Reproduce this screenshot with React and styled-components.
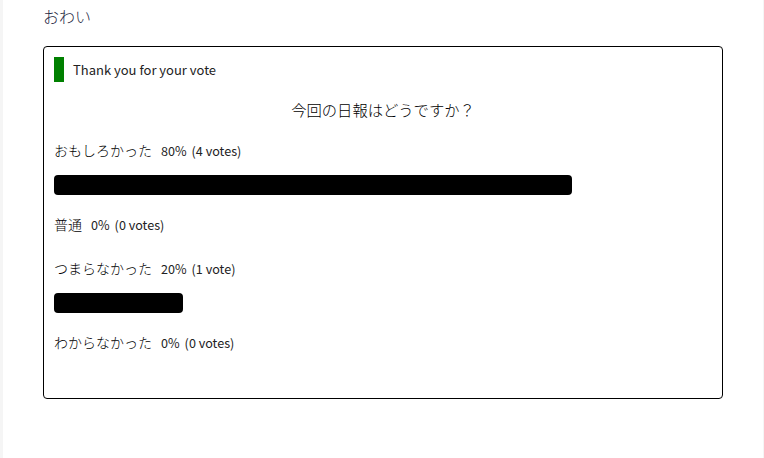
import React from "react";
import styled, { createGlobalStyle } from "styled-components";

const Global = createGlobalStyle`
  html, body { margin: 0; padding: 0; background: #f5f5f5; }
  body { font-family: "Noto Sans CJK JP", "Noto Sans", sans-serif; color: #333; }
`;

const Page = styled.main`
  margin-left: 3px;
  width: 760px;
  min-height: 458px;
  background: #fff;
  padding: 4px 40px 0;
  box-sizing: border-box;
`;

const Title = styled.h2`
  margin: 0 0 18px;
  font-size: 16px;
  line-height: 24px;
  font-weight: 300;
  color: #1f2a44;
`;

const Card = styled.section`
  border: 1px solid #000;
  border-radius: 4px;
  padding: 10px 10px 22px;
  min-height: 350px;
  box-sizing: border-box;
`;

const Notice = styled.div`
  display: flex;
  align-items: center;
  gap: 9px;
  height: 25px;
`;

const NoticeMark = styled.span`
  width: 10px;
  height: 25px;
  background: #008000;
`;

const NoticeText = styled.span`
  font-size: 13px;
  color: #222;
`;

const Question = styled.h3`
  margin: 16px 0 20px;
  text-align: center;
  font-size: 15.3px;
  line-height: 22px;
  font-weight: 300;
  color: #000;
`;

const Option = styled.div`
  display: flex;
  flex-direction: column;
  gap: 15px;
  padding-bottom: ${(p) => (p.$hasBar ? "19px" : "24px")};
`;

const Label = styled.div`
  display: flex;
  align-items: baseline;
  height: 20px;
  line-height: 20px;
  font-size: 14px;
  font-weight: 300;
  color: #000;
`;

const Percent = styled.span`
  font-size: 12.6px;
  font-weight: 400;
  color: #222;
  margin-left: 9px;
  margin-right: 5px;
`;

const Votes = styled.span`
  font-size: 12.6px;
  font-weight: 400;
  color: #222;
`;

const Track = styled.div`
  padding-right: 11px;
`;

const Bar = styled.div`
  height: 20px;
  background: #000;
  border-radius: 4px;
`;

const options = [
  { label: "おもしろかった", pct: 80, votes: 4 },
  { label: "普通", pct: 0, votes: 0 },
  { label: "つまらなかった", pct: 20, votes: 1 },
  { label: "わからなかった", pct: 0, votes: 0 },
];

export default function App() {
  return (
    <>
      <Global />
      <Page>
        <Title>おわい</Title>
        <Card>
          <Notice>
            <NoticeMark />
            <NoticeText>Thank you for your vote</NoticeText>
          </Notice>
          <Question>今回の日報はどうですか？</Question>
          {options.map((o) => (
            <Option key={o.label} $hasBar={o.pct > 0}>
              <Label>
                {o.label}
                <Percent>{o.pct}%</Percent>
                <Votes>
                  ({o.votes} {o.votes === 1 ? "vote" : "votes"})
                </Votes>
              </Label>
              {o.pct > 0 && (
                <Track>
                  <Bar style={{ width: `${o.pct}%` }} />
                </Track>
              )}
            </Option>
          ))}
        </Card>
      </Page>
    </>
  );
}
